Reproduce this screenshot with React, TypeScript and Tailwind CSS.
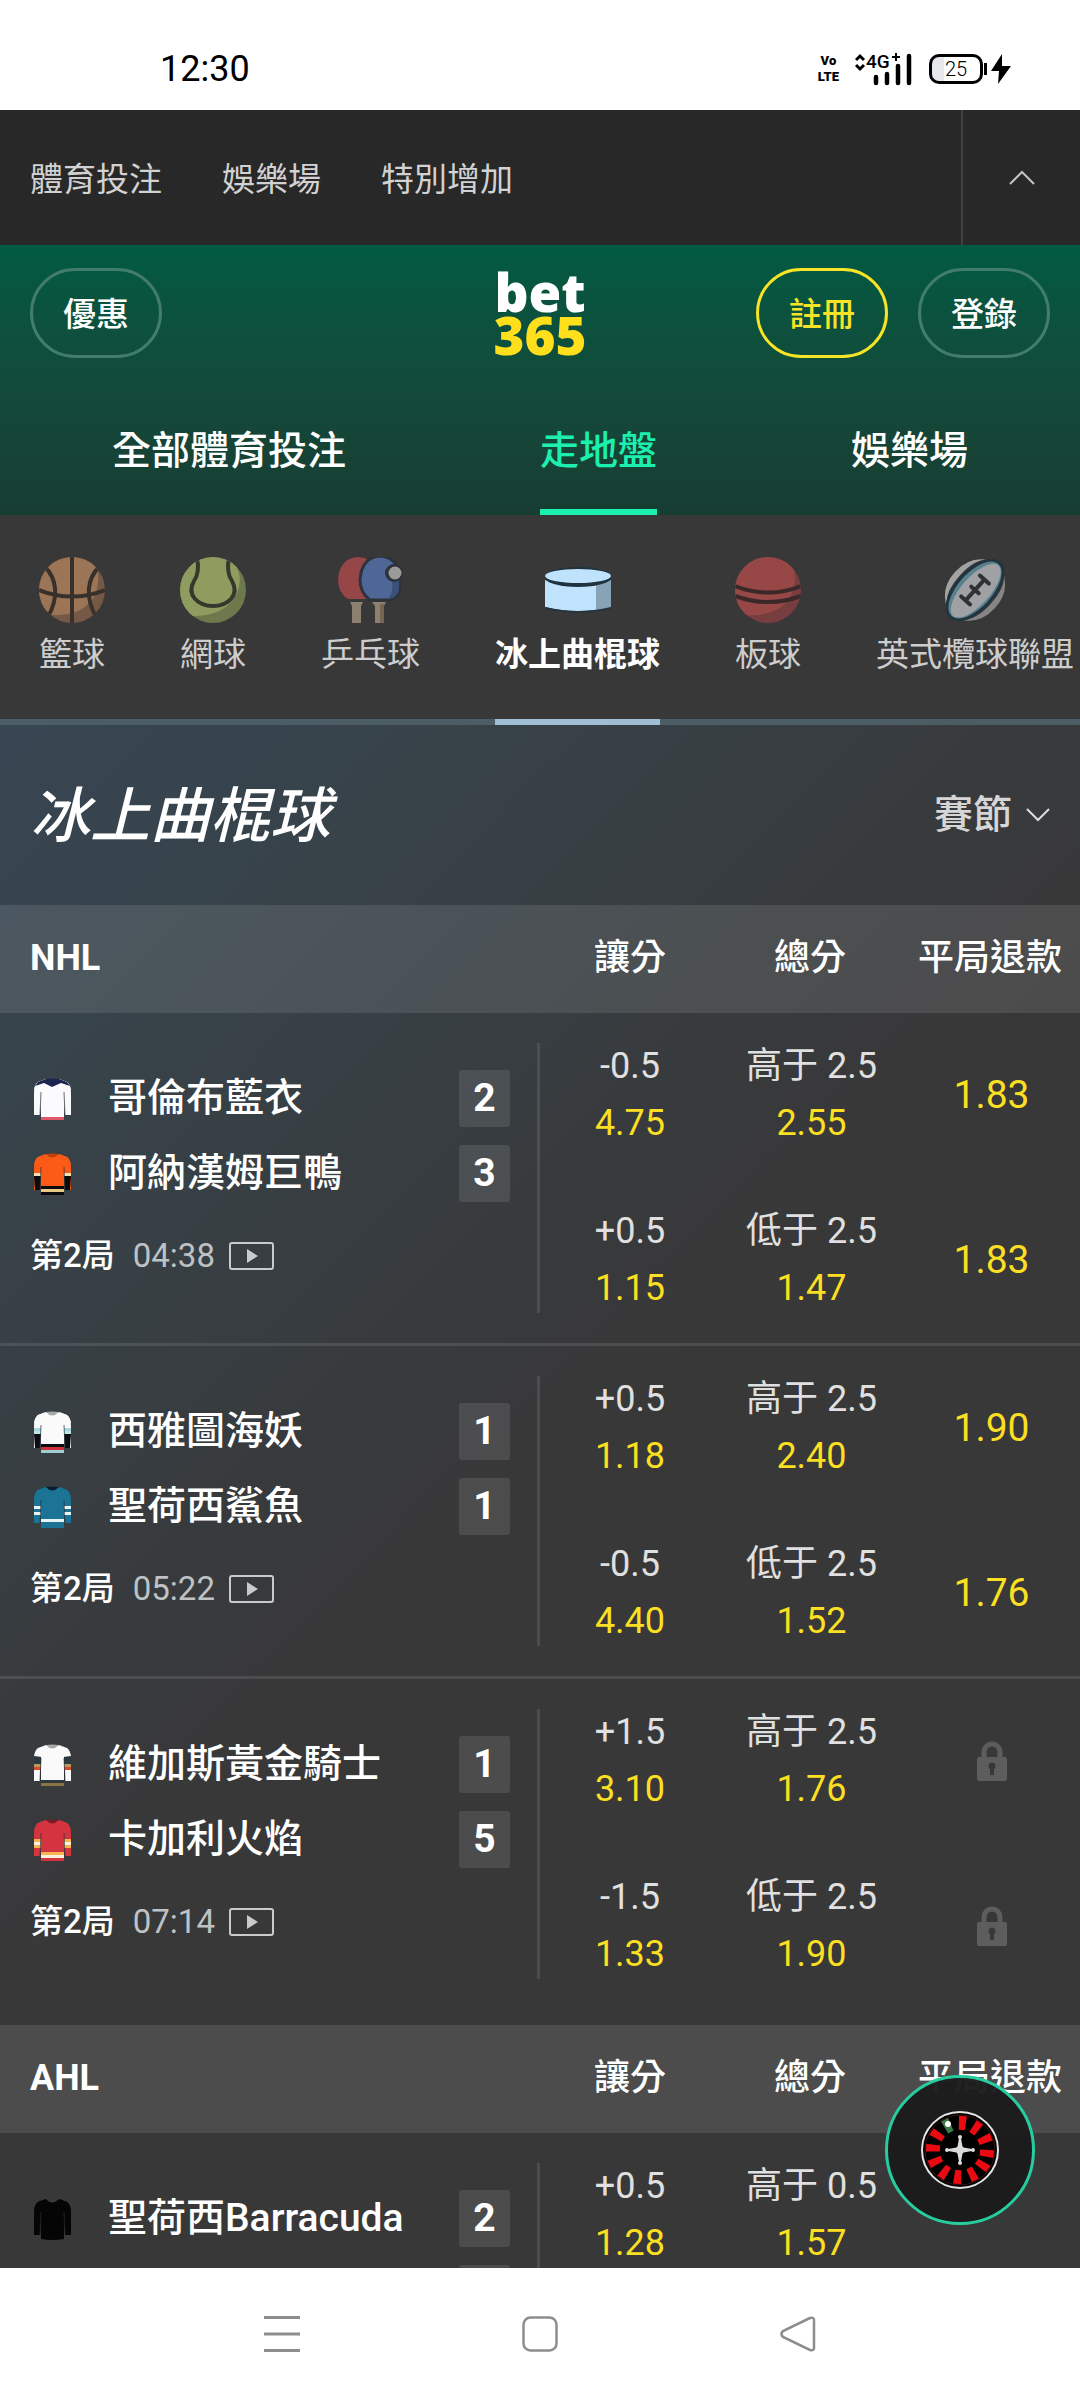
import type { ReactNode } from 'react';

type Cell = { line?: string; odds?: string };
type JerseyKit = {
  body: string;
  yoke?: string;
  collar: string;
  sleeve?: string;
  cuff?: string;
  stripes?: string[];
  hem?: string[];
};
type Match = {
  teams: { name: string; score: string; kit: JerseyKit }[];
  period: string;
  clock: string;
  markets: [Cell, Cell][];
};

const KITS: Record<string, JerseyKit> = {
  columbus: { body: '#fbfafc', yoke: '#1c2450', collar: '#1c2450', hem: ['#e0566b'] },
  anaheim: { body: '#fb5a17', collar: '#c23f0c', cuff: '#0b0b0b', stripes: ['#f4e2b4'], hem: ['#0b0b0b', '#e9c987', '#0b0b0b'] },
  seattle: { body: '#fafafa', collar: '#a7a9ab', cuff: '#0c0d12', stripes: ['#a5d8dc', '#bfe6e6'], hem: ['#0c0d12', '#d22f3c', '#9fced0'] },
  sanJose: { body: '#1b7495', collar: '#0c1c2a', stripes: ['#e8f4f6', '#1b7495', '#e8f4f6'], hem: ['#e8f4f6', '#1b7495', '#1b7495'] },
  vegas: { body: '#fafafa', collar: '#a7a9ab', sleeve: '#2c3a3f', stripes: ['#b79a5b', '#d9482f'], hem: ['#2c3a3f', '#8c7440'] },
  calgary: { body: '#d3343f', collar: '#7c1c26', stripes: ['#f6b455', '#fbf0dc', '#f6b455'], hem: ['#f6b455', '#fbf0dc', '#d3343f'] },
  barracuda: { body: '#050505', collar: '#3a3a3a' },
};

const NHL: Match[] = [
  {
    teams: [
      { name: '哥倫布藍衣', score: '2', kit: KITS.columbus },
      { name: '阿納漢姆巨鴨', score: '3', kit: KITS.anaheim },
    ],
    period: '第2局',
    clock: '04:38',
    markets: [
      [{ line: '-0.5', odds: '4.75' }, { line: '+0.5', odds: '1.15' }],
      [{ line: '高于 2.5', odds: '2.55' }, { line: '低于 2.5', odds: '1.47' }],
      [{ odds: '1.83' }, { odds: '1.83' }],
    ],
  },
  {
    teams: [
      { name: '西雅圖海妖', score: '1', kit: KITS.seattle },
      { name: '聖荷西鯊魚', score: '1', kit: KITS.sanJose },
    ],
    period: '第2局',
    clock: '05:22',
    markets: [
      [{ line: '+0.5', odds: '1.18' }, { line: '-0.5', odds: '4.40' }],
      [{ line: '高于 2.5', odds: '2.40' }, { line: '低于 2.5', odds: '1.52' }],
      [{ odds: '1.90' }, { odds: '1.76' }],
    ],
  },
  {
    teams: [
      { name: '維加斯黃金騎士', score: '1', kit: KITS.vegas },
      { name: '卡加利火焰', score: '5', kit: KITS.calgary },
    ],
    period: '第2局',
    clock: '07:14',
    markets: [
      [{ line: '+1.5', odds: '3.10' }, { line: '-1.5', odds: '1.33' }],
      [{ line: '高于 2.5', odds: '1.76' }, { line: '低于 2.5', odds: '1.90' }],
      [{}, {}],
    ],
  },
];

const AHL: Match[] = [
  {
    teams: [
      { name: '聖荷西Barracuda', score: '2', kit: KITS.barracuda },
      { name: '', score: '', kit: KITS.barracuda },
    ],
    period: '',
    clock: '',
    markets: [
      [{ line: '+0.5', odds: '1.28' }, {}],
      [{ line: '高于 0.5', odds: '1.57' }, {}],
      [{}, {}],
    ],
  },
];

function Jersey({ kit }: { kit: JerseyKit }) {
  const sleeve = kit.sleeve ?? kit.body;
  const stripes = kit.stripes ?? [];
  const hem = kit.hem ?? [];
  const start = kit.cuff ? 23 - stripes.length * 3 : 20;
  return (
    <svg width="37" height="42" viewBox="0 0 37 42" className="shrink-0" aria-hidden="true">
      <path d="M12 1L4 4Q0 7 0 16V37H6L8 14V4Z" fill={sleeve} />
      <path d="M25 1L33 4Q37 7 37 16V37H31L29 14V4Z" fill={sleeve} />
      <path d="M12 1L4 4Q1 6 0 12L8 13V4ZM25 1L33 4Q36 6 37 12L29 13V4Z" fill={kit.body} />
      {kit.sleeve && <path d="M0 25H6V37H0ZM31 25H37V37H31Z" fill={kit.body} />}
      {kit.cuff && <path d="M0 23H7L6 37H1ZM30 23H37L36 37H31Z" fill={kit.cuff} />}
      {stripes.map((c, i) => (
        <path key={i} d={`M0 ${start + i * 3}h7v3h-7zM30 ${start + i * 3}h7v3h-7z`} fill={c} />
      ))}
      <path d="M12 1Q18 4 25 1L30 4V41Q18 43 7 41V4Z" fill={kit.body} />
      {kit.yoke && <path d="M12 1H25L33 4L36 8L27 5L18 9L10 5L1 8L4 4Z" fill={kit.yoke} />}
      {hem.map((c, i) => (
        <rect key={i} x="7" y={42 - (hem.length - i) * 3} width="23" height="3" fill={c} />
      ))}
      <path d="M6 37L7 14M31 37L30 14" fill="none" stroke="#26303a" strokeOpacity="0.7" strokeWidth="1" />
      <path d="M12 1Q18 0 25 1Q18 8 12 1Z" fill={kit.collar} />
    </svg>
  );
}

function IconFrame({ children }: { children: ReactNode }) {
  return (
    <svg width="66" height="66" viewBox="0 0 66 66" aria-hidden="true">
      {children}
    </svg>
  );
}

function Basketball() {
  return (
    <IconFrame>
      <clipPath id="bb"><circle cx="33" cy="33" r="33" /></clipPath>
      <g clipPath="url(#bb)">
        <rect width="66" height="66" fill="#755845" />
        <path d="M0 0H55Q63 20 56 38Q44 60 12 58L0 50Z" fill="#9c7557" />
        <g fill="none" stroke="#38302b" strokeWidth="4">
          <path d="M33 0V66M0 33Q33 46 66 33" />
          <path d="M6 10C18 22 20 40 9 60M60 10C48 22 46 40 57 60" />
        </g>
      </g>
    </IconFrame>
  );
}

function TennisBall() {
  return (
    <IconFrame>
      <clipPath id="tb"><circle cx="33" cy="33" r="33" /></clipPath>
      <g clipPath="url(#tb)">
        <rect width="66" height="66" fill="#6d784d" />
        <path d="M0 0H50Q66 18 56 38Q44 60 10 59L0 50Z" fill="#8f9c60" />
        <path d="M17 1Q20 15 14 24C6 38 18 49 33 49S60 38 52 24Q46 15 49 1" fill="none" stroke="#35382c" strokeWidth="4" />
      </g>
    </IconFrame>
  );
}

function TableTennis() {
  return (
    <IconFrame>
      <path d="M12 45H25L23 49V66H14V49Z" fill="#8c8070" />
      <path d="M34 45H48L46 49V66H37V49Z" fill="#8c8070" />
      <path d="M42 47H46V66H42Z" fill="#776451" />
      <path d="M20 0Q32 0 35 10V36L30 42H10Q0 36 0 22Q2 1 20 0Z" fill="#974648" />
      <path d="M42 -1Q59 0 62 18V33Q60 41 52 43H32Q22 36 22 22Q24 0 42 -1Z" fill="#4e6797" stroke="#2e323b" strokeWidth="3" />
      <path d="M58 23H61V33Q60 40 50 42Q56 34 54 25Z" fill="#3c517a" />
      <circle cx="56" cy="16" r="9" fill="#2e323b" />
      <circle cx="57" cy="16" r="6.500" fill="#9b9b99" />
    </IconFrame>
  );
}

function Puck() {
  return (
    <IconFrame>
      <path d="M0 19V50Q33 58 66 50V19Z" fill="#bfe2fd" />
      <path d="M51 24L66 19V50Q60 53 51 53Z" fill="#88a3b6" />
      <path d="M0 51Q33 59 66 51" fill="none" stroke="#26343d" strokeWidth="2" />
      <ellipse cx="33" cy="20" rx="34" ry="10" fill="#1f323d" />
      <ellipse cx="33" cy="19" rx="33" ry="7" fill="#bfe2fd" />
    </IconFrame>
  );
}

function CricketBall() {
  return (
    <IconFrame>
      <clipPath id="cb"><circle cx="33" cy="33" r="33" /></clipPath>
      <g clipPath="url(#cb)">
        <rect width="66" height="66" fill="#783d3f" />
        <path d="M0 0H54Q66 22 54 42Q42 60 10 58L0 50Z" fill="#984747" />
        <path d="M0 29Q33 42 66 29M0 39Q33 51 66 39" fill="none" stroke="#3b292a" strokeWidth="4" />
      </g>
    </IconFrame>
  );
}

function RugbyBall() {
  return (
    <IconFrame>
      <g transform="rotate(42 33 33)">
        <path d="M12 33Q12 6 26 0Q6 10 6 33T26 66Q12 58 12 33Z" fill="#a3a3a3" />
        <path d="M54 33Q54 6 40 0Q60 10 60 33T40 66Q54 58 54 33Z" fill="#858585" />
        <ellipse cx="33" cy="33" rx="20" ry="38" fill="#22353e" />
        <ellipse cx="33" cy="33" rx="17" ry="35" fill="#58808f" />
        <ellipse cx="34" cy="33" rx="14" ry="34" fill="#a0a1a4" />
        <path d="M33 19V47M27 19H39M28 33H38M27 47H39" stroke="#303133" strokeWidth="4" strokeLinecap="round" />
      </g>
    </IconFrame>
  );
}

const SPORTS = [
  { name: '籃球', icon: <Basketball /> },
  { name: '網球', icon: <TennisBall /> },
  { name: '乒乓球', icon: <TableTennis /> },
  { name: '冰上曲棍球', icon: <Puck />, active: true },
  { name: '板球', icon: <CricketBall /> },
  { name: '英式欖球聯盟', icon: <RugbyBall /> },
];

function StatusBar() {
  return (
    <div className="flex h-[110px] shrink-0 items-center justify-between bg-white pt-7 pr-[69px] pl-40 text-black">
      <time className="text-[36px] leading-none">12:30</time>
      <div className="flex items-center gap-4">
        <div className="flex flex-col items-center text-[13px] leading-4 font-black">
          <span>Vo</span>
          <span>LTE</span>
        </div>
        <svg width="58" height="44" viewBox="0 -6 58 44" aria-hidden="true">
          <path d="M1 7L5 3L9 7M1 12L5 16L9 12" fill="none" stroke="#000" strokeWidth="3" />
          <text x="11" y="15" fontSize="19" fontFamily="Roboto, sans-serif" fontWeight="500">4G</text>
          <path d="M37 4H45M41 0V8" stroke="#000" strokeWidth="2" />
          <path d="M21 30V24M32 30V21M43 30V13M54 30V3" stroke="#000" strokeWidth="4.500" strokeLinecap="round" />
        </svg>
        <div className="flex items-center">
          <div className="flex h-[30px] w-[54px] items-center justify-center rounded-[10px] border-3 border-black bg-linear-to-r from-gray-200 from-25% to-white to-25% text-[20px] leading-6 font-light">25</div>
          <div className="ml-px h-3 w-[3px] bg-black" />
          <svg width="20" height="30" viewBox="0 0 20 30" className="ml-1" aria-hidden="true">
            <path d="M11 0L0 17H8L7 30L20 12H11Z" fill="#000" />
          </svg>
        </div>
      </div>
    </div>
  );
}

function LockIcon() {
  return (
    <svg width="30" height="40" viewBox="0 0 30 40" role="img" aria-label="lock">
      <path d="M7 18V11a8 8 0 0 1 16 0V18" fill="none" stroke="#5d5d5d" strokeWidth="5" />
      <rect y="16" width="30" height="24" rx="2" fill="#5d5d5d" />
      <circle cx="15" cy="25" r="3.500" fill="#383838" />
      <path d="M13 25H17V34H13Z" fill="#383838" />
    </svg>
  );
}

function OddsButton({ cell, empty }: { cell: Cell; empty?: boolean }) {
  return (
    <button type="button" className="flex h-[165px] w-full flex-col items-center justify-center pb-px whitespace-nowrap">
      {cell.line && <span className="text-[36px] leading-[57px] text-[#e0e0e0]">{cell.line}</span>}
      {cell.odds && (
        <span className={cell.line ? 'text-[36px] leading-[57px] text-[#fbdf22]' : 'text-[39px] leading-[57px] text-[#fbdf22]'}>{cell.odds}</span>
      )}
      {!cell.odds && !empty && <LockIcon />}
    </button>
  );
}

function League({ name, matches, hideLocks }: { name: string; matches: Match[]; hideLocks?: boolean }) {
  return (
    <table className="w-full table-fixed border-collapse">
      <thead>
        <tr className="h-[108px] bg-white/10 text-[36px] leading-[54px] text-white">
          <th scope="col" className="w-1/2 pb-0.5 pl-[30px] text-left font-bold">{name}</th>
          {['讓分', '總分', '平局退款'].map((h) => (
            <th key={h} scope="col" className="w-1/6 pb-0.5 font-medium whitespace-nowrap">{h}</th>
          ))}
        </tr>
      </thead>
      <tbody>
        {matches.map((m) => (
          <tr key={m.teams[0].name} className="align-top not-last:border-b-3 not-last:border-white/10">
            <td className="p-0">
              <div className="flex h-[330px] items-center">
                <div className="flex h-full min-w-0 flex-1 flex-col gap-[18px] pt-[57px] pr-[27px] pl-[30px]">
                  {m.teams.map((t, i) => (
                    <div key={i} className="flex h-[57px] shrink-0 items-center">
                      <div className="flex w-[78px] pl-1">{t.name && <Jersey kit={t.kit} />}</div>
                      <span className="flex-1 text-[39px] leading-[57px] font-medium whitespace-nowrap text-white">{t.name}</span>
                      <span className="h-[57px] w-[51px] rounded-[3px] bg-white/10 text-center text-[39px] leading-[56px] font-bold text-white">{t.score}</span>
                    </div>
                  ))}
                  {m.period && (
                    <div className="mt-4 flex h-[39px] items-center text-[33px] leading-[39px]">
                      <span className="font-medium text-white">{m.period}</span>
                      <span className="ml-[18px] text-[#bfc2c4]">{m.clock}</span>
                      <svg width="45" height="28" viewBox="0 0 45 28" className="ml-3.5" role="img" aria-label="video">
                        <rect x="1" y="1" width="43" height="26" rx="2" fill="none" stroke="#c8cacc" strokeWidth="2" />
                        <path d="M18 7L29 14L18 21Z" fill="#c8cacc" />
                      </svg>
                    </div>
                  )}
                </div>
                <div className="h-[270px] w-[3px] bg-white/10" />
              </div>
            </td>
            {m.markets.map((pair, i) => (
              <td key={i} className={i === 0 ? 'p-0' : 'p-0 pl-[3px]'}>
                <OddsButton cell={pair[0]} empty={hideLocks} />
                <OddsButton cell={pair[1]} empty={hideLocks} />
              </td>
            ))}
          </tr>
        ))}
      </tbody>
    </table>
  );
}

const SLOTS = [5, 36, 67, 97, 124, 153, 185, 215, 245, 274, 303];

function Roulette() {
  return (
    <svg width="78" height="78" viewBox="0 0 78 78" aria-hidden="true">
      <circle cx="39" cy="39" r="38" fill="#000" stroke="#e4e4e4" strokeWidth="2" />
      <circle cx="39" cy="39" r="35" fill="none" stroke="#3b1414" strokeWidth="1" />
      {SLOTS.map((a) => (
        <path key={a} d="M35 5H43L42 19H36Z" fill="#e90a12" transform={`rotate(${a} 39 39)`} />
      ))}
      <path d="M35 5H43L42 19H36Z" fill="#3f7a4b" transform="rotate(333 39 39)" />
      <circle cx="27" cy="13" r="3" fill="#fff" />
      <path d="M39 26L41 37L52 39L41 41L39 52L37 41L26 39L37 37Z" fill="#dcdcdc" stroke="#dcdcdc" strokeWidth="1.500" />
      <g fill="#dcdcdc">
        <circle cx="39" cy="39" r="4" />
        <circle cx="39" cy="26" r="2" />
        <circle cx="39" cy="52" r="2" />
        <circle cx="26" cy="39" r="2" />
        <circle cx="52" cy="39" r="2" />
      </g>
    </svg>
  );
}

export default function App() {
  return (
    <div lang="zh-Hant" className="flex h-screen flex-col overflow-hidden bg-[#383838] font-['Roboto','Noto_Sans_CJK_TC',sans-serif]">
      <StatusBar />

      <nav className="flex h-[135px] shrink-0 items-stretch bg-[#282828] text-[33px] text-[#d2d2d2]">
        <div className="flex flex-1 items-center gap-[60px] pt-1 pl-[30px]">
          <a href="#sports">體育投注</a>
          <a href="#casino">娛樂場</a>
          <a href="#extra">特別增加</a>
        </div>
        <button type="button" aria-label="collapse" className="flex w-[119px] items-center justify-center border-l-2 border-[#414141]">
          <svg width="26" height="15" viewBox="0 0 26 15" aria-hidden="true">
            <path d="M1 14L13 2L25 14" fill="none" stroke="#c4c4c4" strokeWidth="2" />
          </svg>
        </button>
      </nav>

      <header className="shrink-0 bg-linear-to-b from-[#015a42] to-[#183d33] text-white">
        <div className="grid h-[136px] grid-cols-3 items-start px-[30px] pt-[23px]">
          <button type="button" className="h-[90px] w-[132px] rounded-full border-3 border-[#427d6b] pt-1 text-[33px] font-medium">優惠</button>
          <a href="#home" className="flex flex-col items-center justify-self-center pt-0.5 font-['Open_Sans',sans-serif] text-[53px] leading-[43px] font-extrabold">
            <span>bet</span>
            <span className="text-[#ffdf1b]">365</span>
          </a>
          <div className="flex justify-end gap-[30px]">
            <button type="button" className="h-[90px] w-[132px] rounded-full border-3 border-[#f7e427] pt-1 text-[33px] font-medium text-[#f7e427]">註冊</button>
            <button type="button" className="h-[90px] w-[132px] rounded-full border-3 border-[#427d6b] pt-1 text-[33px] font-medium">登錄</button>
          </div>
        </div>
        <nav className="flex h-[134px] justify-between px-28 text-[39px] font-medium">
          <a href="#all" className="flex items-center border-b-6 border-transparent pt-3">全部體育投注</a>
          <a href="#inplay" aria-current="page" className="flex items-center border-b-6 border-[#1cf0ae] pt-3 text-[#1cf0ae]">走地盤</a>
          <a href="#games" className="flex items-center border-b-6 border-transparent pt-3">娛樂場</a>
        </nav>
      </header>

      <main className="relative flex min-h-0 flex-1 flex-col overflow-hidden">
        <nav className="flex h-[210px] shrink-0 gap-[75px] bg-[#383838] pl-[39px] shadow-[inset_0_-6px_0_#4d5d65]">
          {SPORTS.map((s) => (
            <a
              key={s.name}
              href={`#${s.name}`}
              className={
                s.active
                  ? 'flex shrink-0 flex-col items-center gap-2 border-b-6 border-[#9fbdd3] pt-[42px] text-[33px] leading-[48px] font-bold text-white'
                  : 'flex shrink-0 flex-col items-center gap-2 border-b-6 border-transparent pt-[42px] text-[33px] leading-[48px] text-[#cdcdcd]'
              }
            >
              {s.icon}
              <span className="whitespace-nowrap">{s.name}</span>
            </a>
          ))}
        </nav>

        <div className="min-h-0 flex-1 overflow-hidden bg-[linear-gradient(135deg,#384653_0px,#374248_350px,#38393b_800px,#383838_950px)]">
          <div className="flex h-[180px] items-center justify-between px-[30px]">
            <h1 className="pt-1 text-[60px] leading-none font-medium text-white italic">冰上曲棍球</h1>
            <button type="button" className="flex items-center gap-3.5 text-[39px] font-medium text-[#d6d6d6]">
              賽節
              <svg width="24" height="14" viewBox="0 0 24 14" aria-hidden="true">
                <path d="M1 1L12 12L23 1" fill="none" stroke="#dcdcdc" strokeWidth="2" />
              </svg>
            </button>
          </div>
          <div className="flex flex-col gap-4">
            <League name="NHL" matches={NHL} />
            <League name="AHL" matches={AHL} hideLocks />
          </div>
        </div>

        <button type="button" aria-label="roulette" className="absolute right-[45px] bottom-[43px] flex size-[150px] items-center justify-center rounded-full border-3 border-[#27cd9f] bg-[#1c1c1c]/97">
          <Roulette />
        </button>
      </main>

      <footer className="flex h-[132px] shrink-0 items-center justify-center gap-[222px] bg-white">
        <button type="button" aria-label="menu">
          <svg width="36" height="36" viewBox="0 0 36 36" aria-hidden="true">
            <path d="M0 1.500H36M0 18H36M0 34.500H36" stroke="#8d8d8d" strokeWidth="3" />
          </svg>
        </button>
        <button type="button" aria-label="home">
          <svg width="36" height="36" viewBox="0 0 36 36" aria-hidden="true">
            <rect x="1.500" y="1.500" width="33" height="33" rx="7" fill="none" stroke="#8d8d8d" strokeWidth="2.500" />
          </svg>
        </button>
        <button type="button" aria-label="back">
          <svg width="36" height="36" viewBox="0 0 36 36" aria-hidden="true">
            <path d="M30 2L3 15Q0 18 3 21L30 34Q34 35 34 32V4Q34 1 30 2Z" fill="none" stroke="#8d8d8d" strokeWidth="2.500" />
          </svg>
        </button>
      </footer>
    </div>
  );
}
